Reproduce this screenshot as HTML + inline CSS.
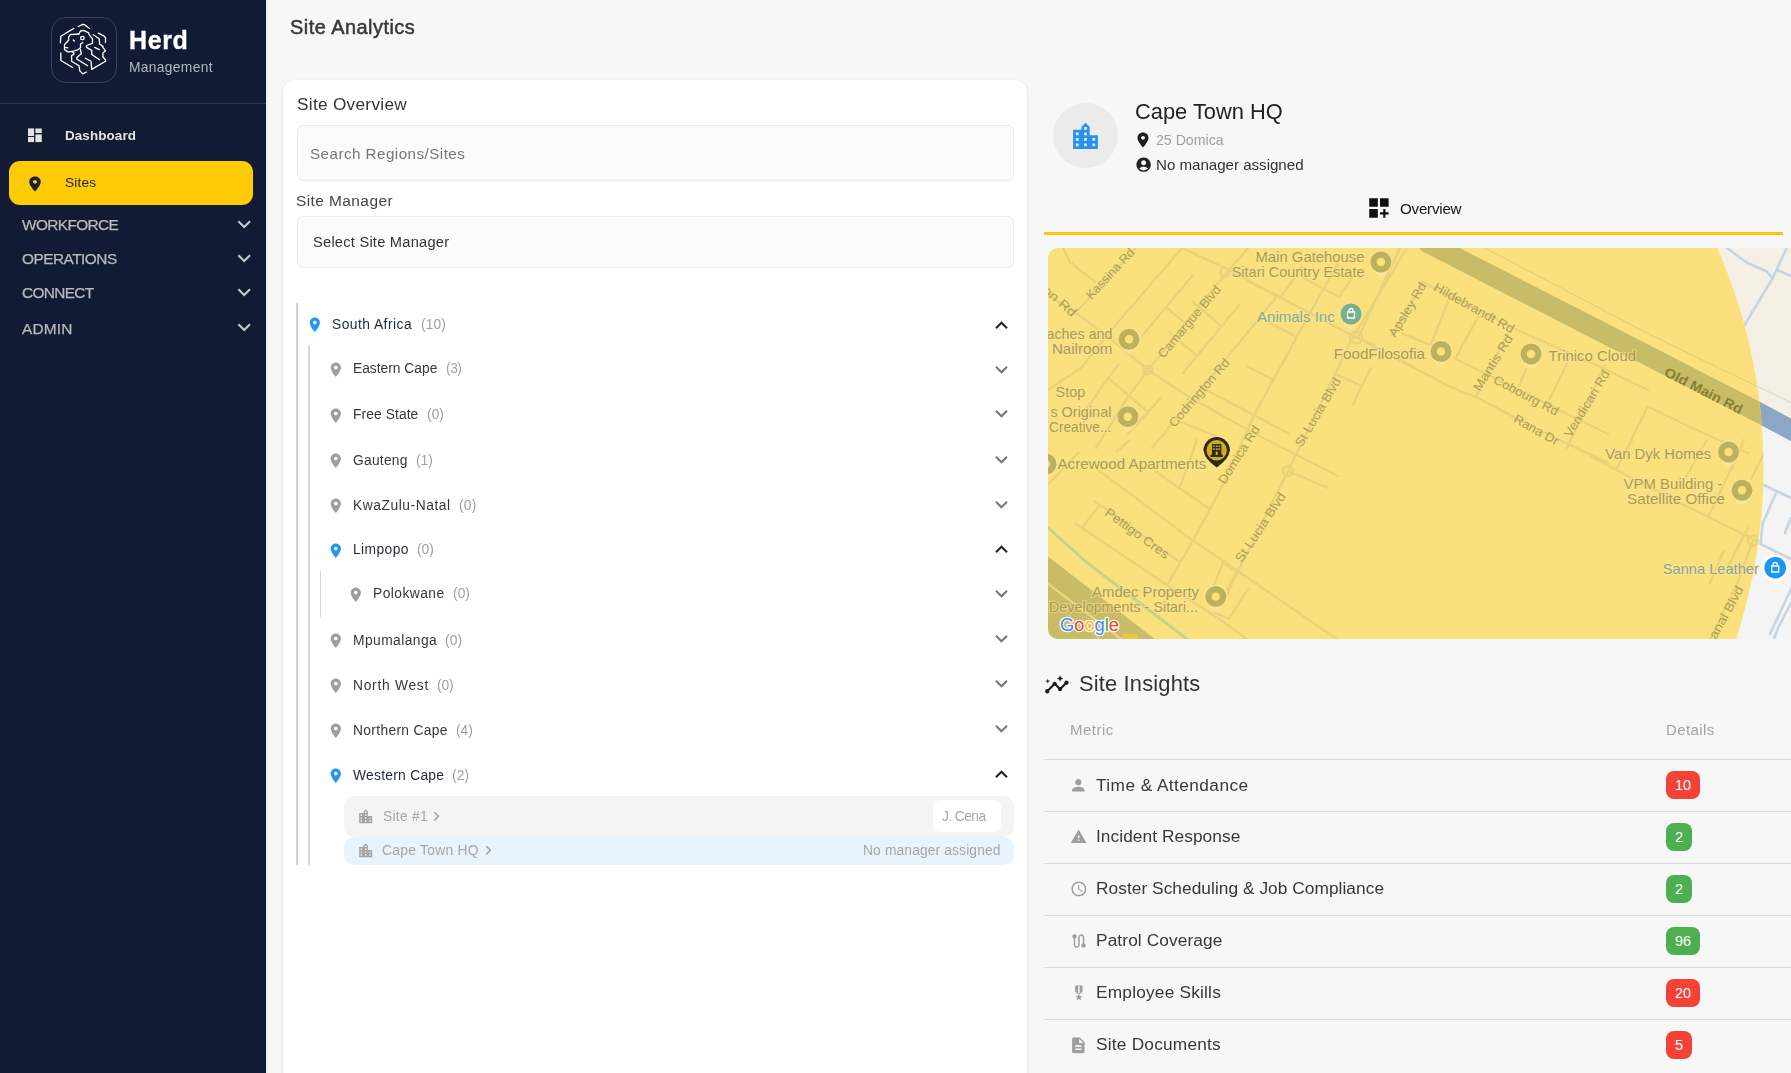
<!DOCTYPE html>
<html><head><meta charset="utf-8"><title>Site Analytics</title>
<style>
*{margin:0;padding:0;box-sizing:border-box}
html,body{width:1791px;height:1073px;overflow:hidden;background:#f7f7f7;font-family:"Liberation Sans",sans-serif;-webkit-font-smoothing:antialiased}
.abs{position:absolute}
.tx{position:absolute;white-space:nowrap;font-family:"Liberation Sans",sans-serif;will-change:transform}
.ic{position:absolute;display:block}
.hl{position:absolute;height:1px;background:#dcdcdc}
</style></head><body>

<div class="abs" style="left:0;top:0;width:266px;height:1073px;background:#111b33"></div>
<div class="abs" style="left:266px;top:0;width:2px;height:1073px;background:#efefef"></div>
<div class="abs" style="left:51px;top:17px;width:66px;height:66px;border:1.2px solid #3b4459;border-radius:15px"><svg style="position:absolute;left:-1.9px;top:-1.9px" width="66" height="66" viewBox="0 0 66 66"><g fill="none" stroke="#ffffff" stroke-width="1.3" stroke-linejoin="round" stroke-linecap="round"><path d="M28.3,10.5 L32.8,8.3 L34.6,8.7 L39.5,12.4"/><path d="M23.8,12.4 L10.8,20.2 L10.4,26.9"/><path d="M10.8,37 L10.8,44.5 L22.7,51.5"/><path d="M48.4,17.2 L53.7,19.8 L55.5,21.7 L55.5,26.6"/><path d="M52.2,30.3 L55.5,34.8 L52.9,37 L52.9,40.7 L55.5,43.7 L55.5,45.2 L41.7,53.4"/><path d="M29,17.6 L30.5,15 L33.5,14.3 L38.7,16.9 L39.1,18.7 L42.5,22.8 L42.5,27.3 L36.5,29.5 L36.5,31.4 L41.7,34.4 L41.7,38.5 L49.6,43.7"/><path d="M29,18 L20.1,18.7 L18.6,21.3 L18.6,24.3 L14.5,28.8 L14.5,33.6 L17.9,35.9 L22.3,35.5 L28.3,33.6 L30.5,31.8 L30.5,28 L32.8,26.6"/><path d="M14.9,31.4 L17.9,31.8"/><path d="M22.3,35.5 L23.8,37 L23.8,38.5 L21.6,39.6 L21.6,45.2 L29,49.7 L29.8,54.9 L32.8,57.9 L36.5,56"/><path d="M30.5,33.6 L31.3,37.7 L26.8,41.5 L26.8,43 L37.6,49.7"/><path d="M35.4,42.2 L41,45.2 L41.7,52.7"/><path d="M43.2,18.7 L49.2,22.8 L49.6,28 L52.9,30.3"/><path d="M44.7,31.4 L49.2,33.6"/><path d="M23.3,24 L24.3,25"/><circle cx="32.4" cy="22.1" r="1.8"/></g></svg></div>
<div class="abs" style="left:0;top:102.5px;width:266px;height:1.5px;background:#2b3448"></div>
<svg class="ic" style="left:0;top:0;width:60px;height:160px" viewBox="0 0 60 160"><g fill="#e2e2e2"><rect x="28" y="128.4" width="6.1" height="7.6"/><rect x="28" y="137" width="6.1" height="5.1"/><rect x="35.4" y="128.5" width="6.4" height="4.5"/><rect x="35.4" y="134.4" width="6.4" height="7.7"/></g></svg>
<div class="abs" style="left:9px;top:161px;width:244px;height:43.5px;background:#fecb06;border-radius:11px"></div>
<svg class="ic" style="left:25.55px;top:174.56px;width:18.00px;height:18.00px;transform:scaleX(1.1)" viewBox="0 0 24 24"><path fill="#17203a" d="M12 2C8.13 2 5 5.13 5 9c0 5.25 7 13 7 13s7-7.75 7-13c0-3.87-3.13-7-7-7m0 9.5c-1.38 0-2.5-1.12-2.5-2.5s1.12-2.5 2.5-2.5 2.5 1.12 2.5 2.5-1.12 2.5-2.5 2.5"/></svg>
<svg class="ic" style="left:231.40px;top:210.77px;width:26.40px;height:26.40px" viewBox="0 0 24 24"><path fill="#c4c6cb" d="M16.59 8.59 12 13.17 7.41 8.59 6 10l6 6 6-6z"/></svg>
<svg class="ic" style="left:231.40px;top:245.37px;width:26.40px;height:26.40px" viewBox="0 0 24 24"><path fill="#c4c6cb" d="M16.59 8.59 12 13.17 7.41 8.59 6 10l6 6 6-6z"/></svg>
<svg class="ic" style="left:231.40px;top:279.47px;width:26.40px;height:26.40px" viewBox="0 0 24 24"><path fill="#c4c6cb" d="M16.59 8.59 12 13.17 7.41 8.59 6 10l6 6 6-6z"/></svg>
<svg class="ic" style="left:231.40px;top:314.07px;width:26.40px;height:26.40px" viewBox="0 0 24 24"><path fill="#c4c6cb" d="M16.59 8.59 12 13.17 7.41 8.59 6 10l6 6 6-6z"/></svg>
<div class="abs" style="left:282.8px;top:79.6px;width:744.2px;height:1100px;background:#fff;border-radius:12px;box-shadow:0px 2px 1px -1px rgba(0,0,0,0.2),0px 1px 1px 0px rgba(0,0,0,0.14),0px 1px 3px 0px rgba(0,0,0,0.12)"></div>
<div class="abs" style="left:296.5px;top:125px;width:717px;height:56px;background:#fbfbfb;border:1px solid #ebebeb;border-radius:6px"></div>
<div class="abs" style="left:296.5px;top:215.5px;width:717px;height:52.5px;background:#fbfbfb;border:1px solid #ebebeb;border-radius:6px"></div>
<div class="abs" style="left:296.3px;top:303px;width:1.6px;height:562px;background:#d0d0d0"></div>
<div class="abs" style="left:308px;top:346px;width:1.6px;height:519px;background:#d6d6d6"></div>
<div class="abs" style="left:320px;top:570.5px;width:1.4px;height:46px;background:#d6d6d6"></div>
<svg class="ic" style="left:306.02px;top:315.57px;width:17.64px;height:17.64px" viewBox="0 0 24 24"><path fill="#2196f3" d="M12 2C8.13 2 5 5.13 5 9c0 5.25 7 13 7 13s7-7.75 7-13c0-3.87-3.13-7-7-7m0 9.5c-1.38 0-2.5-1.12-2.5-2.5s1.12-2.5 2.5-2.5 2.5 1.12 2.5 2.5-1.12 2.5-2.5 2.5"/></svg>
<svg class="ic" style="left:988.86px;top:312.76px;width:24.96px;height:24.96px" viewBox="0 0 24 24"><path fill="#1b2540" d="M12 8l-6 6 1.41 1.41L12 10.83l4.59 4.58L18 14z"/></svg>
<svg class="ic" style="left:326.52px;top:360.57px;width:17.64px;height:17.64px" viewBox="0 0 24 24"><path fill="#9e9e9e" d="M12 2C8.13 2 5 5.13 5 9c0 5.25 7 13 7 13s7-7.75 7-13c0-3.87-3.13-7-7-7m0 9.5c-1.38 0-2.5-1.12-2.5-2.5s1.12-2.5 2.5-2.5 2.5 1.12 2.5 2.5-1.12 2.5-2.5 2.5"/></svg>
<svg class="ic" style="left:988.86px;top:356.71px;width:24.96px;height:24.96px" viewBox="0 0 24 24"><path fill="#777777" d="M16.59 8.59 12 13.17 7.41 8.59 6 10l6 6 6-6z"/></svg>
<svg class="ic" style="left:326.52px;top:406.57px;width:17.64px;height:17.64px" viewBox="0 0 24 24"><path fill="#9e9e9e" d="M12 2C8.13 2 5 5.13 5 9c0 5.25 7 13 7 13s7-7.75 7-13c0-3.87-3.13-7-7-7m0 9.5c-1.38 0-2.5-1.12-2.5-2.5s1.12-2.5 2.5-2.5 2.5 1.12 2.5 2.5-1.12 2.5-2.5 2.5"/></svg>
<svg class="ic" style="left:988.86px;top:401.41px;width:24.96px;height:24.96px" viewBox="0 0 24 24"><path fill="#777777" d="M16.59 8.59 12 13.17 7.41 8.59 6 10l6 6 6-6z"/></svg>
<svg class="ic" style="left:326.52px;top:452.07px;width:17.64px;height:17.64px" viewBox="0 0 24 24"><path fill="#9e9e9e" d="M12 2C8.13 2 5 5.13 5 9c0 5.25 7 13 7 13s7-7.75 7-13c0-3.87-3.13-7-7-7m0 9.5c-1.38 0-2.5-1.12-2.5-2.5s1.12-2.5 2.5-2.5 2.5 1.12 2.5 2.5-1.12 2.5-2.5 2.5"/></svg>
<svg class="ic" style="left:988.86px;top:446.71px;width:24.96px;height:24.96px" viewBox="0 0 24 24"><path fill="#777777" d="M16.59 8.59 12 13.17 7.41 8.59 6 10l6 6 6-6z"/></svg>
<svg class="ic" style="left:326.52px;top:497.27px;width:17.64px;height:17.64px" viewBox="0 0 24 24"><path fill="#9e9e9e" d="M12 2C8.13 2 5 5.13 5 9c0 5.25 7 13 7 13s7-7.75 7-13c0-3.87-3.13-7-7-7m0 9.5c-1.38 0-2.5-1.12-2.5-2.5s1.12-2.5 2.5-2.5 2.5 1.12 2.5 2.5-1.12 2.5-2.5 2.5"/></svg>
<svg class="ic" style="left:988.86px;top:491.71px;width:24.96px;height:24.96px" viewBox="0 0 24 24"><path fill="#777777" d="M16.59 8.59 12 13.17 7.41 8.59 6 10l6 6 6-6z"/></svg>
<svg class="ic" style="left:326.52px;top:541.77px;width:17.64px;height:17.64px" viewBox="0 0 24 24"><path fill="#2196f3" d="M12 2C8.13 2 5 5.13 5 9c0 5.25 7 13 7 13s7-7.75 7-13c0-3.87-3.13-7-7-7m0 9.5c-1.38 0-2.5-1.12-2.5-2.5s1.12-2.5 2.5-2.5 2.5 1.12 2.5 2.5-1.12 2.5-2.5 2.5"/></svg>
<svg class="ic" style="left:988.86px;top:537.46px;width:24.96px;height:24.96px" viewBox="0 0 24 24"><path fill="#1b2540" d="M12 8l-6 6 1.41 1.41L12 10.83l4.59 4.58L18 14z"/></svg>
<svg class="ic" style="left:346.52px;top:585.77px;width:17.64px;height:17.64px" viewBox="0 0 24 24"><path fill="#9e9e9e" d="M12 2C8.13 2 5 5.13 5 9c0 5.25 7 13 7 13s7-7.75 7-13c0-3.87-3.13-7-7-7m0 9.5c-1.38 0-2.5-1.12-2.5-2.5s1.12-2.5 2.5-2.5 2.5 1.12 2.5 2.5-1.12 2.5-2.5 2.5"/></svg>
<svg class="ic" style="left:988.86px;top:580.71px;width:24.96px;height:24.96px" viewBox="0 0 24 24"><path fill="#777777" d="M16.59 8.59 12 13.17 7.41 8.59 6 10l6 6 6-6z"/></svg>
<svg class="ic" style="left:326.52px;top:631.97px;width:17.64px;height:17.64px" viewBox="0 0 24 24"><path fill="#9e9e9e" d="M12 2C8.13 2 5 5.13 5 9c0 5.25 7 13 7 13s7-7.75 7-13c0-3.87-3.13-7-7-7m0 9.5c-1.38 0-2.5-1.12-2.5-2.5s1.12-2.5 2.5-2.5 2.5 1.12 2.5 2.5-1.12 2.5-2.5 2.5"/></svg>
<svg class="ic" style="left:988.86px;top:626.21px;width:24.96px;height:24.96px" viewBox="0 0 24 24"><path fill="#777777" d="M16.59 8.59 12 13.17 7.41 8.59 6 10l6 6 6-6z"/></svg>
<svg class="ic" style="left:326.52px;top:677.07px;width:17.64px;height:17.64px" viewBox="0 0 24 24"><path fill="#9e9e9e" d="M12 2C8.13 2 5 5.13 5 9c0 5.25 7 13 7 13s7-7.75 7-13c0-3.87-3.13-7-7-7m0 9.5c-1.38 0-2.5-1.12-2.5-2.5s1.12-2.5 2.5-2.5 2.5 1.12 2.5 2.5-1.12 2.5-2.5 2.5"/></svg>
<svg class="ic" style="left:988.86px;top:671.21px;width:24.96px;height:24.96px" viewBox="0 0 24 24"><path fill="#777777" d="M16.59 8.59 12 13.17 7.41 8.59 6 10l6 6 6-6z"/></svg>
<svg class="ic" style="left:326.52px;top:722.27px;width:17.64px;height:17.64px" viewBox="0 0 24 24"><path fill="#9e9e9e" d="M12 2C8.13 2 5 5.13 5 9c0 5.25 7 13 7 13s7-7.75 7-13c0-3.87-3.13-7-7-7m0 9.5c-1.38 0-2.5-1.12-2.5-2.5s1.12-2.5 2.5-2.5 2.5 1.12 2.5 2.5-1.12 2.5-2.5 2.5"/></svg>
<svg class="ic" style="left:988.86px;top:716.21px;width:24.96px;height:24.96px" viewBox="0 0 24 24"><path fill="#777777" d="M16.59 8.59 12 13.17 7.41 8.59 6 10l6 6 6-6z"/></svg>
<svg class="ic" style="left:326.52px;top:767.07px;width:17.64px;height:17.64px" viewBox="0 0 24 24"><path fill="#2196f3" d="M12 2C8.13 2 5 5.13 5 9c0 5.25 7 13 7 13s7-7.75 7-13c0-3.87-3.13-7-7-7m0 9.5c-1.38 0-2.5-1.12-2.5-2.5s1.12-2.5 2.5-2.5 2.5 1.12 2.5 2.5-1.12 2.5-2.5 2.5"/></svg>
<svg class="ic" style="left:988.86px;top:761.96px;width:24.96px;height:24.96px" viewBox="0 0 24 24"><path fill="#1b2540" d="M12 8l-6 6 1.41 1.41L12 10.83l4.59 4.58L18 14z"/></svg>
<div class="abs" style="left:344px;top:795.8px;width:669.7px;height:41px;background:#f4f4f4;border-radius:10px"></div>
<div class="abs" style="left:344px;top:836.6px;width:669.7px;height:28.4px;background:#e8f4fd;border-radius:10px"></div>
<div class="abs" style="left:932.6px;top:800.2px;width:68px;height:32.2px;background:#fff;border-radius:8px"></div>
<svg class="ic" style="left:356.93px;top:807.65px;width:17.40px;height:17.40px" viewBox="0 0 24 24"><path fill="#a3a3a3" d="M15 11V5l-3-3-3 3v2H3v14h18V11zm-8 8H5v-2h2zm0-4H5v-2h2zm0-4H5V9h2zm6 8h-2v-2h2zm0-4h-2v-2h2zm0-4h-2V9h2zm0-4h-2V5h2zm6 12h-2v-2h2zm0-4h-2v-2h2z"/></svg>
<svg class="ic" style="left:356.93px;top:842.45px;width:17.40px;height:17.40px" viewBox="0 0 24 24"><path fill="#a3a3a3" d="M15 11V5l-3-3-3 3v2H3v14h18V11zm-8 8H5v-2h2zm0-4H5v-2h2zm0-4H5V9h2zm6 8h-2v-2h2zm0-4h-2v-2h2zm0-4h-2V9h2zm0-4h-2V5h2zm6 12h-2v-2h2zm0-4h-2v-2h2z"/></svg>
<svg class="ic" style="left:427.30px;top:806.64px;width:18.72px;height:18.72px" viewBox="0 0 24 24"><path fill="#a3a3a3" d="M10 6 8.59 7.41 13.17 12l-4.58 4.59L10 18l6-6z"/></svg>
<svg class="ic" style="left:478.70px;top:840.84px;width:18.72px;height:18.72px" viewBox="0 0 24 24"><path fill="#a3a3a3" d="M10 6 8.59 7.41 13.17 12l-4.58 4.59L10 18l6-6z"/></svg>
<div class="abs" style="left:1052.8px;top:102.8px;width:65px;height:65px;border-radius:50%;background:#ebebeb"></div>
<svg class="ic" style="left:1068.73px;top:119.58px;width:33.00px;height:33.00px" viewBox="0 0 24 24"><path fill="#2592ee" d="M15 11V5l-3-3-3 3v2H3v14h18V11zm-8 8H5v-2h2zm0-4H5v-2h2zm0-4H5V9h2zm6 8h-2v-2h2zm0-4h-2v-2h2zm0-4h-2V9h2zm0-4h-2V5h2zm6 12h-2v-2h2zm0-4h-2v-2h2z"/></svg>
<svg class="ic" style="left:1134.30px;top:130.96px;width:18.00px;height:18.00px;transform:scaleX(1.05)" viewBox="0 0 24 24"><path fill="#1e1e1e" d="M12 2C8.13 2 5 5.13 5 9c0 5.25 7 13 7 13s7-7.75 7-13c0-3.87-3.13-7-7-7m0 9.5c-1.38 0-2.5-1.12-2.5-2.5s1.12-2.5 2.5-2.5 2.5 1.12 2.5 2.5-1.12 2.5-2.5 2.5"/></svg>
<svg class="ic" style="left:1134.96px;top:156.15px;width:17.28px;height:17.28px" viewBox="0 0 24 24"><path fill="#222222" d="M12 2C6.48 2 2 6.48 2 12s4.48 10 10 10 10-4.48 10-10S17.52 2 12 2m0 4c1.93 0 3.5 1.57 3.5 3.5S13.93 13 12 13s-3.5-1.57-3.5-3.5S10.07 6 12 6m0 14c-2.03 0-4.43-.82-6.14-2.88C7.55 15.8 9.68 15 12 15s4.45.8 6.14 2.12C16.43 19.18 14.03 20 12 20"/></svg>
<svg class="ic" style="left:1365.77px;top:195.17px;width:25.87px;height:25.87px" viewBox="0 0 24 24"><path fill="#111111" d="M3 3h8v8H3zm10 0h8v8h-8zM3 13h8v8H3zm15 0h-2v3h-3v2h3v3h2v-3h3v-2h-3z"/></svg>
<div class="abs" style="left:1044px;top:232.4px;width:739px;height:2.6px;background:#fec508"></div>
<div class="abs" style="left:1048px;top:248px;width:743px;height:391px;overflow:hidden;border-radius:10px 0 0 10px"><svg width="743" height="391" viewBox="0 0 743 391" style="display:block;font-family:'Liberation Sans',sans-serif"><rect width="743" height="391" fill="#f4f4f4"/><path d="M380,-10 L743,178 L743,-10 Z" fill="#f5f0e5"/><path d="M679.0,0.0 L699.6,15.0 L718.0,23.0 L724.7,30.0" fill="none" stroke="#c6d4e4" stroke-width="2.6" stroke-linecap="round" stroke-linejoin="round"/><path d="M738.7,0.0 L724.7,30.0 L696.0,78.0 L664.0,130.5" fill="none" stroke="#c6d4e4" stroke-width="2.6" stroke-linecap="round" stroke-linejoin="round"/><path d="M729.0,22.0 L743.0,28.0" fill="none" stroke="#c6d4e4" stroke-width="2.6" stroke-linecap="round" stroke-linejoin="round"/><path d="M703.0,231.0 L743.0,250.0" fill="none" stroke="#c6d4e4" stroke-width="2.6" stroke-linecap="round" stroke-linejoin="round"/><path d="M727.5,246.0 L714.5,276.0 L712.6,296.0 L743.0,311.0" fill="none" stroke="#c6d4e4" stroke-width="2.6" stroke-linecap="round" stroke-linejoin="round"/><path d="M743.0,341.0 L722.0,386.0" fill="none" stroke="#c6d4e4" stroke-width="2.6" stroke-linecap="round" stroke-linejoin="round"/><path d="M743.0,270.0 L737.0,285.0" fill="none" stroke="#c6d4e4" stroke-width="2.6" stroke-linecap="round" stroke-linejoin="round"/><path d="M743.0,355.0 L730.0,380.0 L726.0,391.0" fill="none" stroke="#c6d4e4" stroke-width="2.6" stroke-linecap="round" stroke-linejoin="round"/><path d="M380.0,-5.0 L543.0,78.5 L713.5,166.0 L760.0,191.0" fill="none" stroke="#8ca7c4" stroke-width="20" stroke-linecap="round" stroke-linejoin="round" stroke-linecap="butt"/><path d="M437.0,0.0 L600.0,85.7 L743.0,154.7" fill="none" stroke="#d5d9dd" stroke-width="1.2" stroke-linecap="round" stroke-linejoin="round"/><circle cx="168" cy="220" r="547.5" fill="#fbe07e"/><clipPath id="cc"><circle cx="168" cy="220" r="547.5"/></clipPath><g clip-path="url(#cc)"><path d="M28.0,64.0 L88.0,0.0" fill="none" stroke="#ead27a" stroke-width="2.4" stroke-linecap="round" stroke-linejoin="round"/><path d="M0.0,142.0 L34.0,119.0 L65.0,80.0 L134.0,0.0" fill="none" stroke="#ead27a" stroke-width="2.4" stroke-linecap="round" stroke-linejoin="round"/><path d="M94.0,88.0 L145.0,27.0" fill="none" stroke="#ead27a" stroke-width="2.4" stroke-linecap="round" stroke-linejoin="round"/><path d="M48.0,200.0 L80.0,149.0 L100.0,122.0 L170.0,35.0 L200.0,0.0" fill="none" stroke="#ead27a" stroke-width="2.4" stroke-linecap="round" stroke-linejoin="round"/><path d="M135.0,125.0 L192.0,56.0" fill="none" stroke="#ead27a" stroke-width="2.4" stroke-linecap="round" stroke-linejoin="round"/><path d="M104.0,200.0 L200.0,84.0 L230.0,47.0" fill="none" stroke="#ead27a" stroke-width="2.4" stroke-linecap="round" stroke-linejoin="round"/><path d="M119.0,337.0 L145.0,292.6 L175.0,236.7 L205.6,168.0 L257.0,74.0 L290.0,15.0" fill="none" stroke="#ead27a" stroke-width="2.4" stroke-linecap="round" stroke-linejoin="round"/><path d="M175.0,354.0 L240.0,223.0 L305.0,89.0 L359.0,0.0" fill="none" stroke="#ead27a" stroke-width="2.4" stroke-linecap="round" stroke-linejoin="round"/><path d="M310.0,90.0 L352.0,0.0" fill="none" stroke="#ead27a" stroke-width="2.4" stroke-linecap="round" stroke-linejoin="round"/><path d="M30.0,205.0 L0.0,236.7" fill="none" stroke="#ead27a" stroke-width="2.4" stroke-linecap="round" stroke-linejoin="round"/><path d="M69.0,203.0 L82.0,192.0" fill="none" stroke="#ead27a" stroke-width="2.4" stroke-linecap="round" stroke-linejoin="round"/><path d="M232.0,50.0 L254.0,19.0" fill="none" stroke="#ead27a" stroke-width="2.4" stroke-linecap="round" stroke-linejoin="round"/><path d="M343.5,87.6 L375.0,35.4" fill="none" stroke="#ead27a" stroke-width="2.4" stroke-linecap="round" stroke-linejoin="round"/><path d="M382.7,97.0 L400.0,54.0" fill="none" stroke="#ead27a" stroke-width="2.4" stroke-linecap="round" stroke-linejoin="round"/><path d="M428.0,149.0 L459.6,85.7" fill="none" stroke="#ead27a" stroke-width="2.4" stroke-linecap="round" stroke-linejoin="round"/><path d="M407.5,110.0 L430.0,69.0" fill="none" stroke="#ead27a" stroke-width="2.4" stroke-linecap="round" stroke-linejoin="round"/><path d="M471.0,138.0 L478.0,121.0" fill="none" stroke="#ead27a" stroke-width="2.4" stroke-linecap="round" stroke-linejoin="round"/><path d="M501.6,151.0 L519.0,115.6" fill="none" stroke="#ead27a" stroke-width="2.4" stroke-linecap="round" stroke-linejoin="round"/><path d="M519.0,200.0 L556.6,117.4" fill="none" stroke="#ead27a" stroke-width="2.4" stroke-linecap="round" stroke-linejoin="round"/><path d="M579.0,200.0 L600.0,158.4" fill="none" stroke="#ead27a" stroke-width="2.4" stroke-linecap="round" stroke-linejoin="round"/><path d="M569.0,220.0 L584.0,192.0" fill="none" stroke="#ead27a" stroke-width="2.4" stroke-linecap="round" stroke-linejoin="round"/><path d="M638.0,229.0 L658.6,192.0" fill="none" stroke="#ead27a" stroke-width="2.4" stroke-linecap="round" stroke-linejoin="round"/><path d="M660.4,268.4 L684.7,218.0 L695.8,192.0" fill="none" stroke="#ead27a" stroke-width="2.4" stroke-linecap="round" stroke-linejoin="round"/><path d="M703.0,231.0 L718.0,201.0" fill="none" stroke="#ead27a" stroke-width="2.4" stroke-linecap="round" stroke-linejoin="round"/><path d="M705.0,292.6 L690.0,333.7 L662.0,392.0" fill="none" stroke="#ead27a" stroke-width="2.4" stroke-linecap="round" stroke-linejoin="round"/><path d="M662.0,335.5 L676.0,302.0" fill="none" stroke="#ead27a" stroke-width="2.4" stroke-linecap="round" stroke-linejoin="round"/><path d="M132.0,238.6 L149.0,192.0" fill="none" stroke="#ead27a" stroke-width="2.4" stroke-linecap="round" stroke-linejoin="round"/><path d="M166.0,337.4 L175.0,315.0" fill="none" stroke="#ead27a" stroke-width="2.4" stroke-linecap="round" stroke-linejoin="round"/><path d="M200.0,304.0 L179.0,341.0" fill="none" stroke="#ead27a" stroke-width="2.4" stroke-linecap="round" stroke-linejoin="round"/><path d="M200.0,341.0 L180.8,371.0 L167.8,365.0" fill="none" stroke="#ead27a" stroke-width="2.4" stroke-linecap="round" stroke-linejoin="round"/><path d="M35.4,277.7 L51.0,258.0" fill="none" stroke="#ead27a" stroke-width="2.4" stroke-linecap="round" stroke-linejoin="round"/><path d="M119.0,60.0 L136.0,74.0" fill="none" stroke="#ead27a" stroke-width="2.4" stroke-linecap="round" stroke-linejoin="round"/><path d="M121.0,84.0 L149.0,108.0" fill="none" stroke="#ead27a" stroke-width="2.4" stroke-linecap="round" stroke-linejoin="round"/><path d="M145.0,54.0 L173.0,78.0" fill="none" stroke="#ead27a" stroke-width="2.4" stroke-linecap="round" stroke-linejoin="round"/><path d="M680.0,318.0 L700.0,280.0" fill="none" stroke="#ead27a" stroke-width="2.4" stroke-linecap="round" stroke-linejoin="round"/><path d="M15.0,0.0 L22.0,14.0 L47.0,34.0" fill="none" stroke="#ead27a" stroke-width="2.4" stroke-linecap="round" stroke-linejoin="round"/><path d="M0.0,47.0 L28.0,65.0 L48.0,80.0 L65.0,93.0 L100.0,122.0 L138.0,147.0 L200.0,182.0 L290.0,228.0" fill="none" stroke="#ead27a" stroke-width="2.4" stroke-linecap="round" stroke-linejoin="round"/><path d="M134.0,0.0 L175.0,19.0 L200.0,32.0 L252.0,60.0 L308.0,89.5 L327.0,97.0" fill="none" stroke="#ead27a" stroke-width="2.4" stroke-linecap="round" stroke-linejoin="round"/><path d="M319.0,95.0 L400.0,138.0 L428.0,149.0 L467.0,169.6 L519.0,195.7 L560.0,215.0" fill="none" stroke="#ead27a" stroke-width="2.4" stroke-linecap="round" stroke-linejoin="round"/><path d="M200.0,33.5 L252.0,60.0" fill="none" stroke="#ead27a" stroke-width="2.4" stroke-linecap="round" stroke-linejoin="round"/><path d="M222.0,75.0 L247.0,88.0" fill="none" stroke="#ead27a" stroke-width="2.4" stroke-linecap="round" stroke-linejoin="round"/><path d="M200.0,119.0 L226.0,132.0" fill="none" stroke="#ead27a" stroke-width="2.4" stroke-linecap="round" stroke-linejoin="round"/><path d="M289.5,127.0 L313.7,138.0 L323.0,120.0" fill="none" stroke="#ead27a" stroke-width="2.4" stroke-linecap="round" stroke-linejoin="round"/><path d="M313.7,138.0 L305.0,156.6" fill="none" stroke="#ead27a" stroke-width="2.4" stroke-linecap="round" stroke-linejoin="round"/><path d="M256.0,30.0 L291.0,49.0 L304.0,30.0" fill="none" stroke="#ead27a" stroke-width="2.4" stroke-linecap="round" stroke-linejoin="round"/><path d="M373.0,33.5 L465.0,80.0 L556.6,121.0 L600.0,142.0" fill="none" stroke="#ead27a" stroke-width="2.4" stroke-linecap="round" stroke-linejoin="round"/><path d="M354.7,85.7 L382.7,97.0" fill="none" stroke="#ead27a" stroke-width="2.4" stroke-linecap="round" stroke-linejoin="round"/><path d="M352.8,112.0 L400.0,138.0" fill="none" stroke="#ead27a" stroke-width="2.4" stroke-linecap="round" stroke-linejoin="round"/><path d="M407.5,111.0 L526.7,169.6 L560.0,186.0" fill="none" stroke="#ead27a" stroke-width="2.4" stroke-linecap="round" stroke-linejoin="round"/><path d="M60.0,130.0 L100.0,164.0" fill="none" stroke="#ead27a" stroke-width="2.4" stroke-linecap="round" stroke-linejoin="round"/><path d="M71.0,116.0 L60.0,130.0 L34.0,168.0" fill="none" stroke="#ead27a" stroke-width="2.4" stroke-linecap="round" stroke-linejoin="round"/><path d="M112.0,151.0 L80.0,186.0" fill="none" stroke="#ead27a" stroke-width="2.4" stroke-linecap="round" stroke-linejoin="round"/><path d="M160.0,143.0 L200.0,164.0 L240.0,185.0" fill="none" stroke="#ead27a" stroke-width="2.4" stroke-linecap="round" stroke-linejoin="round"/><path d="M130.0,173.0 L168.0,188.0" fill="none" stroke="#ead27a" stroke-width="2.4" stroke-linecap="round" stroke-linejoin="round"/><path d="M50.0,222.0 L145.0,292.6 L200.0,330.0 L290.0,392.0" fill="none" stroke="#ead27a" stroke-width="2.4" stroke-linecap="round" stroke-linejoin="round"/><path d="M108.0,223.7 L160.0,260.0" fill="none" stroke="#ead27a" stroke-width="2.4" stroke-linecap="round" stroke-linejoin="round"/><path d="M47.5,253.5 L132.0,314.0" fill="none" stroke="#ead27a" stroke-width="2.4" stroke-linecap="round" stroke-linejoin="round"/><path d="M28.0,276.0 L119.0,337.0 L170.0,370.0 L200.0,392.0" fill="none" stroke="#ead27a" stroke-width="2.4" stroke-linecap="round" stroke-linejoin="round"/><path d="M543.0,208.8 L632.5,255.4 L701.4,289.0 L720.0,300.0" fill="none" stroke="#ead27a" stroke-width="2.4" stroke-linecap="round" stroke-linejoin="round"/><path d="M600.0,158.4 L640.0,178.0 L700.0,205.0" fill="none" stroke="#ead27a" stroke-width="2.4" stroke-linecap="round" stroke-linejoin="round"/><path d="M175.0,315.0 L200.0,330.0" fill="none" stroke="#ead27a" stroke-width="2.4" stroke-linecap="round" stroke-linejoin="round"/><path d="M240.0,223.0 L280.0,240.0" fill="none" stroke="#ead27a" stroke-width="2.4" stroke-linecap="round" stroke-linejoin="round"/><circle cx="100" cy="122" r="4.5" fill="none" stroke="#ead27a" stroke-width="2.4"/><circle cx="240" cy="223" r="5" fill="none" stroke="#ead27a" stroke-width="2.4"/><circle cx="308" cy="89.5" r="6" fill="none" stroke="#ead27a" stroke-width="2.4"/><circle cx="177" cy="24" r="4.5" fill="none" stroke="#ead27a" stroke-width="2.4"/><circle cx="705" cy="292.6" r="5" fill="none" stroke="#ead27a" stroke-width="2.4"/><path d="M380.0,-5.0 L543.0,78.5 L713.5,166.0 L760.0,191.0" fill="none" stroke="#c9bc66" stroke-width="20" stroke-linecap="round" stroke-linejoin="round" stroke-linecap="butt"/><path d="M437.0,0.0 L600.0,85.7 L743.0,154.7" fill="none" stroke="#e6d27c" stroke-width="1.3" stroke-linecap="round" stroke-linejoin="round"/><path d="M0,308.6 L108,392 L0,392 Z" fill="#c9bc66"/><path d="M0.0,335.8 L73.0,391.0" fill="none" stroke="#ead77f" stroke-width="2.2" stroke-linecap="round" stroke-linejoin="round"/><path d="M0.0,352.0 L52.0,391.0" fill="none" stroke="#d8ca72" stroke-width="1.2" stroke-linecap="round" stroke-linejoin="round"/><path d="M0.0,279.6 L37.0,313.0 L140.0,392.0" fill="none" stroke="#c6d584" stroke-width="3" stroke-linecap="round" stroke-linejoin="round"/><rect x="74" y="386" width="16" height="8" rx="1.5" fill="#e8c64a"/></g><text x="207.5" y="14.0" font-size="14.2" fill="#a99d4d" text-anchor="start" font-weight="normal" textLength="109" lengthAdjust="spacingAndGlyphs" stroke="#fbe4a0" stroke-width="2.2" paint-order="stroke" stroke-opacity="0.5">Main Gatehouse</text><text x="183.7" y="29.0" font-size="14.2" fill="#a99d4d" text-anchor="start" font-weight="normal" textLength="132.8" lengthAdjust="spacingAndGlyphs" stroke="#fbe4a0" stroke-width="2.2" paint-order="stroke" stroke-opacity="0.5">Sitari Country Estate</text><path d="M321.2,14.0 A11.7,11.7 0 1 1 344.6,14.0 Q343.4,23.5 332.9,29.5 Q322.4,23.5 321.2,14.0Z" fill="#fbe6a0" opacity="0.7"/><circle cx="332.9" cy="14.0" r="10.5" fill="#bdb25b"/><circle cx="332.9" cy="14.0" r="4.2" fill="#fbe07d"/><text x="209.0" y="73.6" font-size="14.2" fill="#80ad8f" text-anchor="start" font-weight="normal" textLength="77.7" lengthAdjust="spacingAndGlyphs" stroke="#fbe4a0" stroke-width="2.2" paint-order="stroke" stroke-opacity="0.5">Animals Inc</text><path d="M291.3,66.0 A11.7,11.7 0 1 1 314.7,66.0 Q313.5,75.5 303.0,81.5 Q292.5,75.5 291.3,66.0Z" fill="#fbe6a0" opacity="0.7"/><circle cx="303.0" cy="66.0" r="10.5" fill="#78b08b"/><circle cx="303.0" cy="66.0" r="4.2" fill="#78b08b"/><path d="M299.5,64 h7 v6 h-7 z M301,64 v-1.5 a2,2 0 0 1 4,0 v1.5" fill="none" stroke="#fff" stroke-width="1.3"/><text x="285.7" y="111.0" font-size="14.2" fill="#a99d4d" text-anchor="start" font-weight="normal" textLength="91.3" lengthAdjust="spacingAndGlyphs" stroke="#fbe4a0" stroke-width="2.2" paint-order="stroke" stroke-opacity="0.5">FoodFilosofia</text><path d="M381.3,103.5 A11.7,11.7 0 1 1 404.7,103.5 Q403.5,113.0 393.0,119.0 Q382.5,113.0 381.3,103.5Z" fill="#fbe6a0" opacity="0.7"/><circle cx="393.0" cy="103.5" r="10.5" fill="#bdb25b"/><circle cx="393.0" cy="103.5" r="4.2" fill="#fbe07d"/><text x="-1.5" y="90.8" font-size="14.2" fill="#a99d4d" text-anchor="start" font-weight="normal" textLength="66" lengthAdjust="spacingAndGlyphs" stroke="#fbe4a0" stroke-width="2.2" paint-order="stroke" stroke-opacity="0.5">aches and</text><text x="3.9" y="106.2" font-size="14.2" fill="#a99d4d" text-anchor="start" font-weight="normal" textLength="60.6" lengthAdjust="spacingAndGlyphs" stroke="#fbe4a0" stroke-width="2.2" paint-order="stroke" stroke-opacity="0.5">Nailroom</text><path d="M69.3,91.3 A11.7,11.7 0 1 1 92.7,91.3 Q91.5,100.8 81.0,106.8 Q70.5,100.8 69.3,91.3Z" fill="#fbe6a0" opacity="0.7"/><circle cx="81.0" cy="91.3" r="10.5" fill="#bdb25b"/><circle cx="81.0" cy="91.3" r="4.2" fill="#fbe07d"/><text x="7.5" y="149.0" font-size="14.2" fill="#a99d4d" text-anchor="start" font-weight="normal" textLength="29.8" lengthAdjust="spacingAndGlyphs" stroke="#fbe4a0" stroke-width="2.2" paint-order="stroke" stroke-opacity="0.5">Stop</text><text x="2.4" y="168.7" font-size="14.2" fill="#a99d4d" text-anchor="start" font-weight="normal" textLength="61" lengthAdjust="spacingAndGlyphs" stroke="#fbe4a0" stroke-width="2.2" paint-order="stroke" stroke-opacity="0.5">s Original</text><text x="1.0" y="183.6" font-size="14.2" fill="#a99d4d" text-anchor="start" font-weight="normal" textLength="62.4" lengthAdjust="spacingAndGlyphs" stroke="#fbe4a0" stroke-width="2.2" paint-order="stroke" stroke-opacity="0.5">Creative...</text><path d="M68.1,168.7 A11.7,11.7 0 1 1 91.5,168.7 Q90.3,178.1 79.8,184.2 Q69.3,178.1 68.1,168.7Z" fill="#fbe6a0" opacity="0.7"/><circle cx="79.8" cy="168.7" r="10.5" fill="#bdb25b"/><circle cx="79.8" cy="168.7" r="4.2" fill="#fbe07d"/><text x="9.4" y="221.0" font-size="14.2" fill="#a99d4d" text-anchor="start" font-weight="normal" textLength="149" lengthAdjust="spacingAndGlyphs" stroke="#fbe4a0" stroke-width="2.2" paint-order="stroke" stroke-opacity="0.5">Acrewood Apartments</text><path d="M-13.7,216.0 A11.7,11.7 0 1 1 9.7,216.0 Q8.5,225.4 -2.0,231.5 Q-12.5,225.4 -13.7,216.0Z" fill="#fbe6a0" opacity="0.7"/><circle cx="-2.0" cy="216.0" r="10.5" fill="#bdb25b"/><circle cx="-2.0" cy="216.0" r="4.2" fill="#fbe07d"/><text x="44.0" y="348.6" font-size="14.2" fill="#a99d4d" text-anchor="start" font-weight="normal" textLength="107" lengthAdjust="spacingAndGlyphs" stroke="#fbe4a0" stroke-width="2.2" paint-order="stroke" stroke-opacity="0.5">Amdec Property</text><text x="1.0" y="363.5" font-size="14.2" fill="#a99d4d" text-anchor="start" font-weight="normal" textLength="149" lengthAdjust="spacingAndGlyphs" stroke="#fbe4a0" stroke-width="2.2" paint-order="stroke" stroke-opacity="0.5">Developments - Sitari...</text><path d="M156.1,348.6 A11.7,11.7 0 1 1 179.5,348.6 Q178.3,358.1 167.8,364.1 Q157.3,358.1 156.1,348.6Z" fill="#fbe6a0" opacity="0.7"/><circle cx="167.8" cy="348.6" r="10.5" fill="#bdb25b"/><circle cx="167.8" cy="348.6" r="4.2" fill="#fbe07d"/><text x="500.6" y="113.3" font-size="14.2" fill="#a99d4d" text-anchor="start" font-weight="normal" textLength="87.4" lengthAdjust="spacingAndGlyphs" stroke="#fbe4a0" stroke-width="2.2" paint-order="stroke" stroke-opacity="0.5">Trinico Cloud</text><path d="M471.3,106.0 A11.7,11.7 0 1 1 494.7,106.0 Q493.5,115.5 483.0,121.5 Q472.5,115.5 471.3,106.0Z" fill="#fbe6a0" opacity="0.7"/><circle cx="483.0" cy="106.0" r="10.5" fill="#bdb25b"/><circle cx="483.0" cy="106.0" r="4.2" fill="#fbe07d"/><text x="557.2" y="210.6" font-size="14.2" fill="#a99d4d" text-anchor="start" font-weight="normal" textLength="106" lengthAdjust="spacingAndGlyphs" stroke="#fbe4a0" stroke-width="2.2" paint-order="stroke" stroke-opacity="0.5">Van Dyk Homes</text><path d="M668.9,204.0 A11.7,11.7 0 1 1 692.3,204.0 Q691.1,213.4 680.6,219.5 Q670.1,213.4 668.9,204.0Z" fill="#fbe6a0" opacity="0.7"/><circle cx="680.6" cy="204.0" r="10.5" fill="#bdb25b"/><circle cx="680.6" cy="204.0" r="4.2" fill="#fbe07d"/><text x="575.6" y="241.4" font-size="14.2" fill="#a99d4d" text-anchor="start" font-weight="normal" textLength="98.8" lengthAdjust="spacingAndGlyphs" stroke="#fbe4a0" stroke-width="2.2" paint-order="stroke" stroke-opacity="0.5">VPM Building -</text><text x="579.0" y="256.3" font-size="14.2" fill="#a99d4d" text-anchor="start" font-weight="normal" textLength="98" lengthAdjust="spacingAndGlyphs" stroke="#fbe4a0" stroke-width="2.2" paint-order="stroke" stroke-opacity="0.5">Satellite Office</text><path d="M682.3,242.3 A11.7,11.7 0 1 1 705.7,242.3 Q704.5,251.8 694.0,257.8 Q683.5,251.8 682.3,242.3Z" fill="#fbe6a0" opacity="0.7"/><circle cx="694.0" cy="242.3" r="10.5" fill="#bdb25b"/><circle cx="694.0" cy="242.3" r="4.2" fill="#fbe07d"/><text x="614.8" y="326.2" font-size="14.2" fill="#8aa596" text-anchor="start" font-weight="normal" textLength="96" lengthAdjust="spacingAndGlyphs" stroke="#fbe4a0" stroke-width="2.2" paint-order="stroke" stroke-opacity="0.5">Sanna Leather</text><path d="M714.5,319.7 A12.7,12.7 0 1 1 739.9,319.7 Q739,330 727.2,337 Q715.4,330 714.5,319.7Z" fill="#ffffff"/><circle cx="727.2" cy="319.7" r="10.8" fill="#1a98f1"/><path d="M723.7,318 h7 v6 h-7 z M725.2,318 v-1.5 a2,2 0 0 1 4,0 v1.5" fill="none" stroke="#fff" stroke-width="1.3"/><text x="65.3" y="28.6" font-size="12.5" fill="#ab9f52" font-weight="normal" text-anchor="middle" textLength="64.4" lengthAdjust="spacingAndGlyphs" transform="rotate(-46.9 65.3 28.6)">Kassina Rd</text><text x="9.1" y="56.4" font-size="12.5" fill="#ab9f52" font-weight="normal" text-anchor="middle" textLength="39.7" lengthAdjust="spacingAndGlyphs" transform="rotate(40.9 9.1 56.4)">on Rd</text><text x="144.4" y="76.4" font-size="12.5" fill="#ab9f52" font-weight="normal" text-anchor="middle" textLength="90.1" lengthAdjust="spacingAndGlyphs" transform="rotate(-50.0 144.4 76.4)">Camargue Blvd</text><text x="154.4" y="147.4" font-size="12.5" fill="#ab9f52" font-weight="normal" text-anchor="middle" textLength="85.8" lengthAdjust="spacingAndGlyphs" transform="rotate(-49.3 154.4 147.4)">Codrington Rd</text><text x="194.5" y="209.0" font-size="12.5" fill="#ab9f52" font-weight="normal" text-anchor="middle" textLength="66.2" lengthAdjust="spacingAndGlyphs" transform="rotate(-57.6 194.5 209.0)">Domica Rd</text><text x="215.9" y="281.7" font-size="12.5" fill="#ab9f52" font-weight="normal" text-anchor="middle" textLength="80.6" lengthAdjust="spacingAndGlyphs" transform="rotate(-56.3 215.9 281.7)">St Lucia Blvd</text><text x="273.6" y="166.3" font-size="12.5" fill="#ab9f52" font-weight="normal" text-anchor="middle" textLength="77.9" lengthAdjust="spacingAndGlyphs" transform="rotate(-59.5 273.6 166.3)">St Lucia Blvd</text><text x="363.1" y="63.8" font-size="12.5" fill="#ab9f52" font-weight="normal" text-anchor="middle" textLength="61.0" lengthAdjust="spacingAndGlyphs" transform="rotate(-58.9 363.1 63.8)">Apsley Rd</text><text x="424.0" y="63.6" font-size="12.5" fill="#ab9f52" font-weight="normal" text-anchor="middle" textLength="89.9" lengthAdjust="spacingAndGlyphs" transform="rotate(29.0 424.0 63.6)">Hildebrandt Rd</text><text x="448.6" y="117.0" font-size="12.5" fill="#ab9f52" font-weight="normal" text-anchor="middle" textLength="63.6" lengthAdjust="spacingAndGlyphs" transform="rotate(-58.2 448.6 117.0)">Mantis Rd</text><text x="476.2" y="151.2" font-size="12.5" fill="#ab9f52" font-weight="normal" text-anchor="middle" textLength="71.7" lengthAdjust="spacingAndGlyphs" transform="rotate(27.9 476.2 151.2)">Cobourg Rd</text><text x="486.3" y="185.6" font-size="12.5" fill="#ab9f52" font-weight="normal" text-anchor="middle" textLength="49.3" lengthAdjust="spacingAndGlyphs" transform="rotate(29.4 486.3 185.6)">Rana Dr</text><text x="542.5" y="157.8" font-size="12.5" fill="#ab9f52" font-weight="normal" text-anchor="middle" textLength="76.0" lengthAdjust="spacingAndGlyphs" transform="rotate(-58.8 542.5 157.8)">Vendicari Rd</text><text x="653.6" y="146.8" font-size="13.5" fill="#8c7f33" font-weight="bold" text-anchor="middle" textLength="85.8" lengthAdjust="spacingAndGlyphs" transform="rotate(27.0 653.6 146.8)">Old Main Rd</text><text x="681.9" y="366.5" font-size="12.5" fill="#ab9f52" font-weight="normal" text-anchor="middle" textLength="57.8" lengthAdjust="spacingAndGlyphs" transform="rotate(-61.0 681.9 366.5)">anal Blvd</text><text x="86.7" y="288.8" font-size="12.5" fill="#ab9f52" font-weight="normal" text-anchor="middle" textLength="75.9" lengthAdjust="spacingAndGlyphs" transform="rotate(36.2 86.7 288.8)">Pettigo Cres</text><path d="M155.5,202.3 A13.2,13.2 0 1 1 181.9,202.3 Q181,211 168.7,219.5 Q156.4,211 155.5,202.3Z" fill="#2e2a16"/><circle cx="168.7" cy="202.3" r="10.2" fill="#d1ad1d"/><path d="M162.5,209 h12.4 v-2.2 h-12.4z" fill="#2e2a16"/><path d="M164,196 h9.4 v11 h-9.4z" fill="#2e2a16"/><path d="M165.3,197.5h1.6v1.6h-1.6zM167.9,197.5h1.6v1.6h-1.6zM170.5,197.5h1.6v1.6h-1.6zM165.3,200.3h1.6v1.6h-1.6zM167.9,200.3h1.6v1.6h-1.6zM170.5,200.3h1.6v1.6h-1.6zM167.7,203.5h2v3.5h-2z" fill="#d1ad1d"/><g font-size="18.3" font-weight="normal" stroke="#ffffff" stroke-width="2.4" paint-order="stroke" stroke-linejoin="round"><text x="12" y="383" fill="#4285f4">G<tspan fill="#ea4335">o</tspan><tspan fill="#fbbc05">o</tspan><tspan fill="#4285f4">g</tspan><tspan fill="#34a853">l</tspan><tspan fill="#ea4335">e</tspan></text></g></svg></div>
<svg class="ic" style="left:1043.71px;top:671.85px;width:25.68px;height:25.68px" viewBox="0 0 24 24"><path fill="#1b1b1b" d="M21 8c-1.45 0-2.26 1.44-1.93 2.51l-3.55 3.56c-.3-.09-.74-.09-1.04 0l-2.55-2.55C12.27 10.45 11.46 9 10 9c-1.45 0-2.27 1.44-1.93 2.52l-4.56 4.55C2.44 15.74 1 16.55 1 18c0 1.1.9 2 2 2 1.45 0 2.26-1.44 1.93-2.51l4.55-4.56c.3.09.74.09 1.04 0l2.55 2.55C12.73 16.55 13.54 18 15 18c1.45 0 2.27-1.44 1.930-2.52l3.56-3.55c1.07.33 2.51-.48 2.51-1.93 0-1.1-.9-2-2-2m-6 1 .94-2.07L18 6l-2.06-.93L15 3l-.92 2.07L12 6l2.08.93zM3.5 11 4 9l2-.5L4 8l-.5-2L3 8l-2 .5L3 9z"/></svg>
<div class="hl" style="left:1044px;top:759.0px;width:747px;height:1.2px"></div>
<div class="hl" style="left:1044px;top:810.9px;width:747px;height:1.2px"></div>
<div class="hl" style="left:1044px;top:863.1px;width:747px;height:1.2px"></div>
<div class="hl" style="left:1044px;top:915.2px;width:747px;height:1.2px"></div>
<div class="hl" style="left:1044px;top:966.8px;width:747px;height:1.2px"></div>
<div class="hl" style="left:1044px;top:1018.9px;width:747px;height:1.2px"></div>
<svg class="ic" style="left:1069.40px;top:775.90px;width:18.60px;height:18.60px" viewBox="0 0 24 24"><path fill="#9e9e9e" d="M12 12c2.21 0 4-1.790 4-4s-1.79-4-4-4-4 1.79-4 4 1.79 4 4 4m0 2c-2.67 0-8 1.34-8 4v2h16v-2c0-2.66-5.33-4-8-4"/></svg>
<svg class="ic" style="left:1070.06px;top:828.46px;width:17.28px;height:17.28px" viewBox="0 0 24 24"><path fill="#9e9e9e" d="M1 21h22L12 2zm12-3h-2v-2h2zm0-4h-2v-4h2z"/></svg>
<svg class="ic" style="left:1069.82px;top:880.42px;width:17.76px;height:17.76px" viewBox="0 0 24 24"><path fill="#9e9e9e" d="M11.99 2C6.47 2 2 6.48 2 12s4.47 10 9.99 10C17.52 22 22 17.52 22 12S17.52 2 11.990 2M12 20c-4.42 0-8-3.58-8-8s3.58-8 8-8 8 3.58 8 8-3.58 8-8 8m.5-13H11v6l5.25 3.15.75-1.23-4.5-2.67z"/></svg>
<svg class="ic" style="left:1069.70px;top:932.20px;width:18.00px;height:18.00px" viewBox="0 0 24 24"><path fill="#9e9e9e" d="M19 15.18V7c0-2.21-1.79-4-4-4s-4 1.79-4 4v10c0 1.1-.9 2-2 2s-2-.9-2-2V8.82C8.16 8.4 9 7.3 9 6c0-1.66-1.34-3-3-3S3 4.34 3 6c0 1.3.84 2.4 2 2.82V17c0 2.21 1.79 4 4 4s4-1.79 4-4V7c0-1.1.9-2 2-2s2 .9 2 2v8.18c-1.16.41-2 1.51-2 2.820 0 1.66 1.34 3 3 3s3-1.34 3-3c0-1.3-.84-2.4-2-2.82"/></svg>
<svg class="ic" style="left:1069.82px;top:984.12px;width:17.76px;height:17.76px" viewBox="0 0 24 24"><path fill="#9e9e9e" d="M17 10.43V2H7v8.43c0 .35.18.68.49.86l4.18 2.51-.99 2.34-3.41.29 2.59 2.24L9.07 22 12 20.23 14.93 22l-.78-3.33 2.59-2.24-3.41-.29-.99-2.34 4.18-2.51c.31-.18.48-.51.48-.86m-4 1.8-1 .6-1-.6V3h2z"/></svg>
<svg class="ic" style="left:1069.34px;top:1035.64px;width:18.72px;height:18.72px" viewBox="0 0 24 24"><path fill="#9e9e9e" d="M14 2H6c-1.1 0-1.99.9-1.99 2L4 20c0 1.1.89 2 1.99 2H18c1.1 0 2-.9 2-2V8zm2 16H8v-2h8zm0-4H8v-2h8zm-3-5V3.5L18.5 9z"/></svg>
<div class="abs" style="left:1666px;top:771.2px;width:34px;height:28px;border-radius:8px;background:#f44336;color:#fff;font-size:14.5px;line-height:28px;text-align:center">10</div>
<div class="abs" style="left:1666px;top:823.1px;width:26px;height:28px;border-radius:8px;background:#4caf50;color:#fff;font-size:14.5px;line-height:28px;text-align:center">2</div>
<div class="abs" style="left:1666px;top:875.3px;width:26px;height:28px;border-radius:8px;background:#4caf50;color:#fff;font-size:14.5px;line-height:28px;text-align:center">2</div>
<div class="abs" style="left:1666px;top:927.2px;width:34px;height:28px;border-radius:8px;background:#4caf50;color:#fff;font-size:14.5px;line-height:28px;text-align:center">96</div>
<div class="abs" style="left:1666px;top:979.0px;width:34px;height:28px;border-radius:8px;background:#f44336;color:#fff;font-size:14.5px;line-height:28px;text-align:center">20</div>
<div class="abs" style="left:1666px;top:1031.0px;width:26px;height:28px;border-radius:8px;background:#f44336;color:#fff;font-size:14.5px;line-height:28px;text-align:center">5</div>
<span id="t0" class="tx" style="left:129.20px;top:28.33px;font-size:25.01px;line-height:25.01px;color:#ffffff;letter-spacing:0.594px;font-weight:bold;-webkit-text-stroke:0.35px #fff;">Herd</span>
<span id="t1" class="tx" style="left:128.60px;top:60.82px;font-size:13.79px;line-height:13.79px;color:#b3b7bf;letter-spacing:0.335px;">Management</span>
<span id="t2" class="tx" style="left:64.80px;top:129.12px;font-size:13.44px;line-height:13.44px;color:#e3e4e7;letter-spacing:0.094px;font-weight:bold;">Dashboard</span>
<span id="t3" class="tx" style="left:65.40px;top:175.94px;font-size:13.66px;line-height:13.66px;color:#1a2035;letter-spacing:0.195px;">Sites</span>
<span id="t4" class="tx" style="left:21.70px;top:217.46px;font-size:15.40px;line-height:15.40px;color:#bababa;letter-spacing:-0.621px;-webkit-text-stroke:0.25px #bababa;">WORKFORCE</span>
<span id="t5" class="tx" style="left:21.70px;top:251.46px;font-size:15.40px;line-height:15.40px;color:#bababa;letter-spacing:-0.511px;-webkit-text-stroke:0.25px #bababa;">OPERATIONS</span>
<span id="t6" class="tx" style="left:21.70px;top:285.46px;font-size:15.40px;line-height:15.40px;color:#bababa;letter-spacing:-0.672px;-webkit-text-stroke:0.25px #bababa;">CONNECT</span>
<span id="t7" class="tx" style="left:21.70px;top:321.46px;font-size:15.40px;line-height:15.40px;color:#bababa;letter-spacing:0.221px;-webkit-text-stroke:0.25px #bababa;">ADMIN</span>
<span id="t8" class="tx" style="left:290.10px;top:17.60px;font-size:19.96px;line-height:19.96px;color:#383838;letter-spacing:0.471px;-webkit-text-stroke:0.5px #383838;">Site Analytics</span>
<span id="t9" class="tx" style="left:296.80px;top:95.94px;font-size:17.21px;line-height:17.21px;color:#333333;letter-spacing:0.306px;">Site Overview</span>
<span id="t10" class="tx" style="left:309.60px;top:145.67px;font-size:15.15px;line-height:15.15px;color:#767676;letter-spacing:0.487px;">Search Regions/Sites</span>
<span id="t11" class="tx" style="left:296.30px;top:193.40px;font-size:15.47px;line-height:15.47px;color:#454545;letter-spacing:0.415px;">Site Manager</span>
<span id="t12" class="tx" style="left:312.70px;top:235.08px;font-size:14.67px;line-height:14.67px;color:#333333;letter-spacing:0.225px;">Select Site Manager</span>
<span id="t13" class="tx" style="left:332.10px;top:317.82px;font-size:13.80px;line-height:13.80px;color:#1d2840;letter-spacing:0.469px;">South Africa</span>
<span id="t14" class="tx" style="left:420.80px;top:317.82px;font-size:13.80px;line-height:13.80px;color:#a0a0a0;letter-spacing:0.073px;">(10)</span>
<span id="t15" class="tx" style="left:353.20px;top:361.82px;font-size:13.80px;line-height:13.80px;color:#383838;letter-spacing:-0.001px;">Eastern Cape</span>
<span id="t16" class="tx" style="left:446.40px;top:361.82px;font-size:13.80px;line-height:13.80px;color:#a0a0a0;letter-spacing:-0.454px;">(3)</span>
<span id="t17" class="tx" style="left:352.90px;top:407.82px;font-size:13.80px;line-height:13.80px;color:#383838;letter-spacing:0.094px;">Free State</span>
<span id="t18" class="tx" style="left:427.00px;top:407.82px;font-size:13.80px;line-height:13.80px;color:#a0a0a0;letter-spacing:0.046px;">(0)</span>
<span id="t19" class="tx" style="left:352.90px;top:453.82px;font-size:13.80px;line-height:13.80px;color:#383838;letter-spacing:0.255px;">Gauteng</span>
<span id="t20" class="tx" style="left:416.40px;top:453.82px;font-size:13.80px;line-height:13.80px;color:#a0a0a0;letter-spacing:-0.054px;">(1)</span>
<span id="t21" class="tx" style="left:352.90px;top:498.82px;font-size:13.80px;line-height:13.80px;color:#383838;letter-spacing:0.557px;">KwaZulu-Natal</span>
<span id="t22" class="tx" style="left:458.70px;top:498.82px;font-size:13.80px;line-height:13.80px;color:#a0a0a0;letter-spacing:0.196px;">(0)</span>
<span id="t23" class="tx" style="left:352.90px;top:542.82px;font-size:13.80px;line-height:13.80px;color:#1d2840;letter-spacing:0.421px;">Limpopo</span>
<span id="t24" class="tx" style="left:417.40px;top:542.82px;font-size:13.80px;line-height:13.80px;color:#a0a0a0;letter-spacing:-0.054px;">(0)</span>
<span id="t25" class="tx" style="left:372.90px;top:586.82px;font-size:13.80px;line-height:13.80px;color:#383838;letter-spacing:0.446px;">Polokwane</span>
<span id="t26" class="tx" style="left:452.50px;top:586.82px;font-size:13.80px;line-height:13.80px;color:#a0a0a0;letter-spacing:0.046px;">(0)</span>
<span id="t27" class="tx" style="left:352.90px;top:633.82px;font-size:13.80px;line-height:13.80px;color:#383838;letter-spacing:0.433px;">Mpumalanga</span>
<span id="t28" class="tx" style="left:445.10px;top:633.82px;font-size:13.80px;line-height:13.80px;color:#a0a0a0;letter-spacing:0.145px;">(0)</span>
<span id="t29" class="tx" style="left:352.90px;top:678.82px;font-size:13.80px;line-height:13.80px;color:#383838;letter-spacing:0.724px;">North West</span>
<span id="t30" class="tx" style="left:436.70px;top:678.82px;font-size:13.80px;line-height:13.80px;color:#a0a0a0;letter-spacing:-0.105px;">(0)</span>
<span id="t31" class="tx" style="left:352.90px;top:723.82px;font-size:13.80px;line-height:13.80px;color:#383838;letter-spacing:0.330px;">Northern Cape</span>
<span id="t32" class="tx" style="left:455.90px;top:723.82px;font-size:13.80px;line-height:13.80px;color:#a0a0a0;letter-spacing:-0.005px;">(4)</span>
<span id="t33" class="tx" style="left:352.90px;top:768.82px;font-size:13.80px;line-height:13.80px;color:#1d2840;letter-spacing:0.275px;">Western Cape</span>
<span id="t34" class="tx" style="left:452.40px;top:768.82px;font-size:13.80px;line-height:13.80px;color:#a0a0a0;letter-spacing:0.145px;">(2)</span>
<span id="t35" class="tx" style="left:382.60px;top:809.82px;font-size:13.80px;line-height:13.80px;color:#a6a6a6;letter-spacing:0.266px;">Site #1</span>
<span id="t36" class="tx" style="left:942.20px;top:809.82px;font-size:13.80px;line-height:13.80px;color:#a6a6a6;letter-spacing:-0.566px;">J. Cena</span>
<span id="t37" class="tx" style="left:382.40px;top:843.82px;font-size:13.80px;line-height:13.80px;color:#a6a6a6;letter-spacing:0.296px;">Cape Town HQ</span>
<span id="t38" class="tx" style="left:863.40px;top:843.82px;font-size:13.80px;line-height:13.80px;color:#a6a6a6;letter-spacing:0.137px;">No manager assigned</span>
<span id="t39" class="tx" style="left:1135.10px;top:101.00px;font-size:21.85px;line-height:21.85px;color:#222222;letter-spacing:-0.000px;">Cape Town HQ</span>
<span id="t40" class="tx" style="left:1156.40px;top:133.48px;font-size:14.19px;line-height:14.19px;color:#a0a0a0;letter-spacing:-0.029px;">25 Domica</span>
<span id="t41" class="tx" style="left:1156.40px;top:156.68px;font-size:15.15px;line-height:15.15px;color:#333333;letter-spacing:-0.032px;">No manager assigned</span>
<span id="t42" class="tx" style="left:1399.90px;top:200.70px;font-size:15.13px;line-height:15.13px;color:#151515;letter-spacing:-0.213px;">Overview</span>
<span id="t43" class="tx" style="left:1079.10px;top:672.95px;font-size:21.92px;line-height:21.92px;color:#333333;letter-spacing:0.158px;">Site Insights</span>
<span id="t44" class="tx" style="left:1069.90px;top:721.74px;font-size:15.07px;line-height:15.07px;color:#a3a3a3;letter-spacing:0.468px;">Metric</span>
<span id="t45" class="tx" style="left:1666.10px;top:721.78px;font-size:15.02px;line-height:15.02px;color:#a3a3a3;letter-spacing:0.408px;">Details</span>
<span id="t46" class="tx" style="left:1095.80px;top:776.86px;font-size:17.30px;line-height:17.30px;color:#383838;letter-spacing:0.421px;">Time & Attendance</span>
<span id="t47" class="tx" style="left:1095.80px;top:827.86px;font-size:17.30px;line-height:17.30px;color:#383838;letter-spacing:0.072px;">Incident Response</span>
<span id="t48" class="tx" style="left:1095.80px;top:879.86px;font-size:17.30px;line-height:17.30px;color:#383838;letter-spacing:0.053px;">Roster Scheduling & Job Compliance</span>
<span id="t49" class="tx" style="left:1095.80px;top:931.86px;font-size:17.30px;line-height:17.30px;color:#383838;letter-spacing:0.109px;">Patrol Coverage</span>
<span id="t50" class="tx" style="left:1095.80px;top:983.86px;font-size:17.30px;line-height:17.30px;color:#383838;letter-spacing:0.202px;">Employee Skills</span>
<span id="t51" class="tx" style="left:1095.80px;top:1035.86px;font-size:17.30px;line-height:17.30px;color:#383838;letter-spacing:0.210px;">Site Documents</span>
</body></html>
